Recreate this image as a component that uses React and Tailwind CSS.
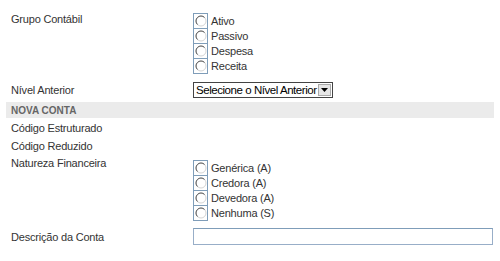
import React from 'react';

const RadioGlyph = () => (
  <svg width="12" height="12" viewBox="0 0 12 12" className="block">
    <circle cx="6" cy="6" r="5" fill="#fff" stroke="#d4d4d4" strokeWidth="1" />
    <path d="M2.46 9.54 A5 5 0 0 1 9.54 2.46" fill="none" stroke="#555" strokeWidth="1" />
  </svg>
);

function RadioList({ options }) {
  return (
    <div className="flex flex-col">
      {options.map((opt, i) => (
        <div key={opt} className={`flex items-center h-[16px] ${i > 0 ? '-mt-px' : ''}`}>
          <span className="w-[15px] h-[16px] border border-[#7f9db9] flex items-center justify-center bg-white">
            <RadioGlyph />
          </span>
          <span className="ml-[3px] leading-[16px]">{opt}</span>
        </div>
      ))}
    </div>
  );
}

function Row({ label, children, className = '' }) {
  return (
    <div className={`grid grid-cols-[187px_1fr] ${className}`}>
      <div className="pl-[5px] leading-[14px]">{label}</div>
      <div>{children}</div>
    </div>
  );
}

export default function App() {
  return (
    <div className="w-[500px] h-[261px] bg-white px-[6px] pt-[12px] text-[11px] text-[#333] font-['Liberation_Sans',Arial,sans-serif] tracking-[-0.2px]">
      <Row label="Grupo Contábil">
        <div className="pt-[1px]">
          <RadioList options={['Ativo', 'Passivo', 'Despesa', 'Receita']} />
        </div>
      </Row>

      <Row label="Nível Anterior" className="mt-[8px] items-center">
        <div className="w-[140px] h-[16px] border border-[#444] flex items-stretch bg-white">
          <span className="flex-1 pl-[2px] text-[11.5px] leading-[14px] text-black tracking-[-0.45px] whitespace-nowrap">
            Selecione o Nível Anterior
          </span>
          <span className="w-[13px] border border-[#aaa] bg-[#e6e6e6] flex items-center justify-center m-px">
            <svg width="7" height="4" viewBox="0 0 7 4"><path d="M0 0h7L3.5 4z" fill="#000" /></svg>
          </span>
        </div>
      </Row>

      <div className="mt-[4px] h-[16px] bg-[#ebebeb] pl-[5px] flex items-center text-[10px] font-bold text-[#666] tracking-normal">
        NOVA CONTA
      </div>

      <Row label="Código Estruturado" className="h-[18px] items-center mt-[1px]" />
      <Row label="Código Reduzido" className="h-[18px] items-center" />

      <Row label="Natureza Financeira" className="mt-[1px]">
        <div className="pt-[4px]">
          <RadioList options={['Genérica (A)', 'Credora (A)', 'Devedora (A)', 'Nenhuma (S)']} />
        </div>
      </Row>

      <Row label="Descrição da Conta" className="mt-[7px] items-center">
        <div className="w-[300px] h-[17px] border border-[#98aec8] border-t-[#7f9db9] bg-white" />
      </Row>
    </div>
  );
}
